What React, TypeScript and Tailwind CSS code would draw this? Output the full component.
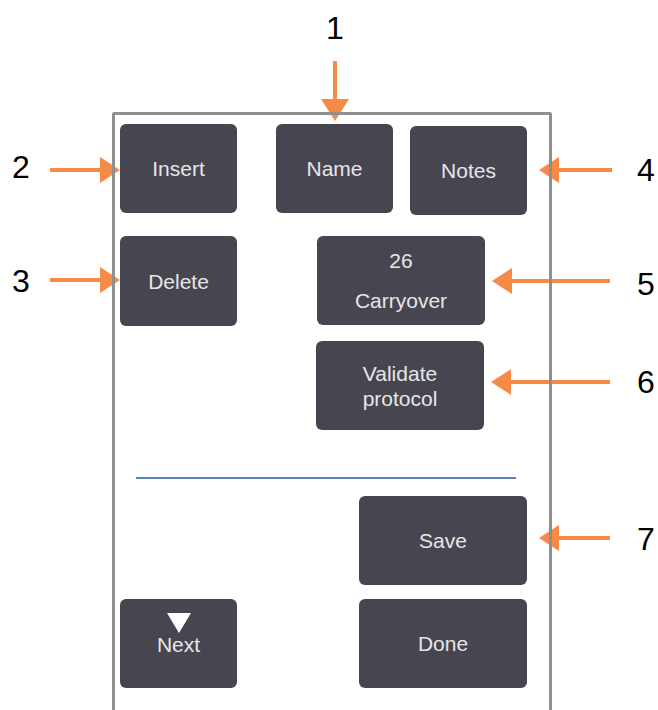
import type { ReactNode } from 'react'

const ORANGE = '#f68b47'

interface KeyProps {
  className: string
  children: ReactNode
}

function Key({ className, children }: KeyProps) {
  return (
    <div
      className={`flex flex-col items-center justify-center rounded-[6px] bg-[#474650] text-[21px] leading-[25px] text-[#e6e6e6] ${className}`}
    >
      {children}
    </div>
  )
}

function HArrow({ y, from, tip }: { y: number; from: number; tip: number }) {
  const dir = tip > from ? 1 : -1
  const base = tip - dir * 20
  return (
    <g fill={ORANGE}>
      <rect x={Math.min(from, base)} y={y - 2} width={Math.abs(base - from)} height={4} />
      <polygon points={`${base},${y - 13} ${tip},${y} ${base},${y + 13}`} />
    </g>
  )
}

const LABELS = [
  { n: '1', left: 'left-[326px]', top: 'top-[12px]' },
  { n: '2', left: 'left-[12px]', top: 'top-[151px]' },
  { n: '3', left: 'left-[12px]', top: 'top-[265px]' },
  { n: '4', left: 'left-[637px]', top: 'top-[154px]' },
  { n: '5', left: 'left-[637px]', top: 'top-[268px]' },
  { n: '6', left: 'left-[637px]', top: 'top-[366px]' },
  { n: '7', left: 'left-[637px]', top: 'top-[523px]' },
]

export default function App() {
  return (
    <div className="relative h-[710px] w-[658px] overflow-hidden bg-white font-['Liberation_Sans',Arial,sans-serif]">
      {/* callout arrows sit under the panel border */}
      <svg className="absolute left-0 top-0" width="658" height="710" viewBox="0 0 658 710">
        <g fill={ORANGE}>
          <rect x={333} y={61} width={4} height={39} />
          <polygon points="321,99 349,99 335,121" />
        </g>
        <HArrow y={170} from={50} tip={120} />
        <HArrow y={280} from={50} tip={120} />
        <HArrow y={170} from={612} tip={539} />
        <HArrow y={281} from={610} tip={492} />
        <HArrow y={382} from={610} tip={491} />
        <HArrow y={538} from={610} tip={539} />
      </svg>

      {LABELS.map((l) => (
        <span
          key={l.n}
          className={`absolute ${l.left} ${l.top} w-[18px] text-center text-[32px] leading-none text-black`}
        >
          {l.n}
        </span>
      ))}

      <div className="relative ml-[112px] mt-[112px] flex h-[610px] w-[440px] flex-col rounded-t-[3px] border-x-[3px] border-t-[3px] border-[#8f8f8f]">
        <div className="flex items-start pl-[5px] pt-[9px]">
          <Key className="h-[89px] w-[117px]">Insert</Key>
          <Key className="ml-[39px] h-[89px] w-[117px]">Name</Key>
          <Key className="ml-[17px] mt-[2px] h-[89px] w-[117px]">Notes</Key>
        </div>

        <div className="mt-[21px] flex items-start pl-[5px]">
          <Key className="h-[90px] w-[117px]">Delete</Key>
          <Key className="ml-[80px] h-[89px] w-[168px] gap-[15px]">
            <span>26</span>
            <span>Carryover</span>
          </Key>
        </div>

        <div className="mt-[15px] flex pl-[201px]">
          <Key className="h-[89px] w-[168px] text-center">
            <span>Validate</span>
            <span>protocol</span>
          </Key>
        </div>

        <div className="ml-[21px] mt-[47px] h-[1.5px] w-[380px] bg-[#5a86b0]" />

        <div className="mt-[17px] flex pl-[244px]">
          <Key className="h-[89px] w-[168px]">Save</Key>
        </div>

        <div className="mt-[14px] flex items-start pl-[5px]">
          <Key className="h-[89px] w-[117px] justify-start pt-[14px]">
            <span className="h-0 w-0 border-x-[12.5px] border-t-[20px] border-x-transparent border-t-white" />
            <span className="mt-[-1px]">Next</span>
          </Key>
          <Key className="ml-[122px] h-[89px] w-[168px]">Done</Key>
        </div>
      </div>
    </div>
  )
}
